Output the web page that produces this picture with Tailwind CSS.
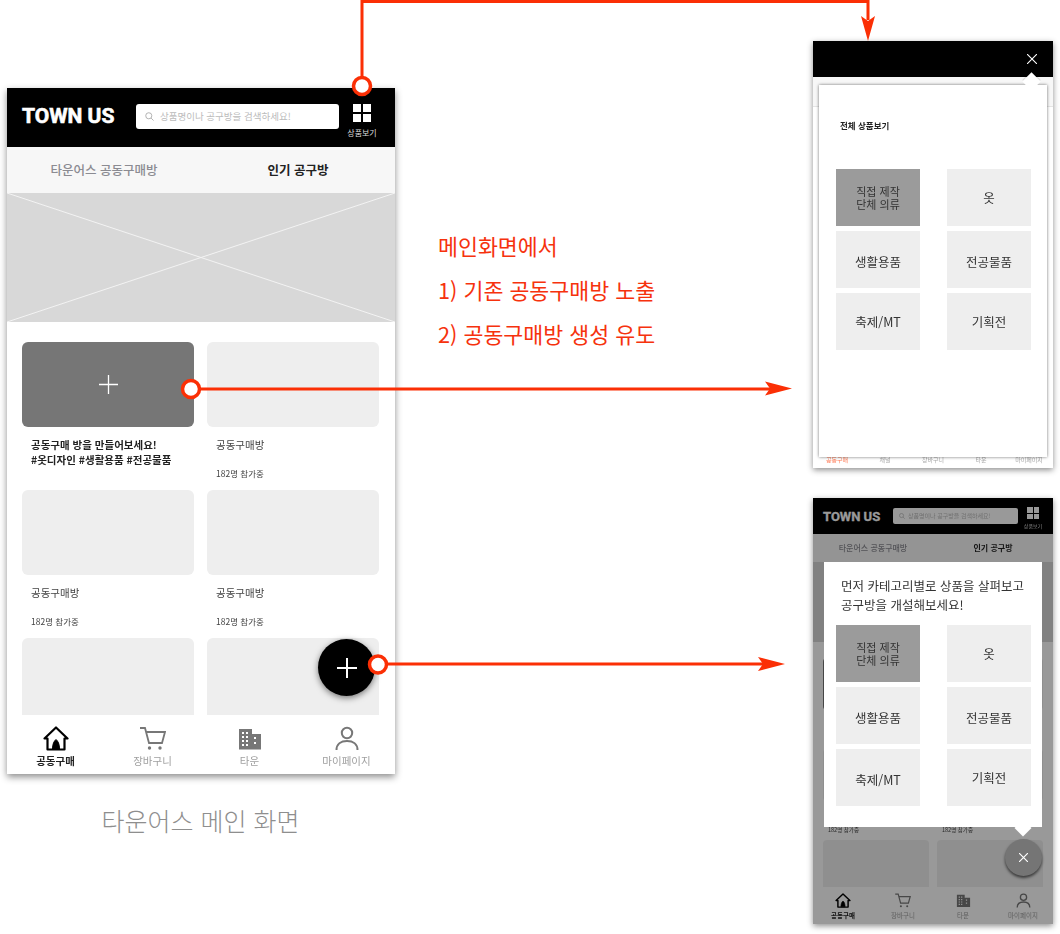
<!DOCTYPE html>
<html lang="ko">
<head>
<meta charset="utf-8">
<title>타운어스 메인 화면</title>
<script src="https://cdn.jsdelivr.net/npm/@tailwindcss/browser@4"></script>
</head>
<body class="bg-white">
<main class="relative w-[1060px] h-[934px] overflow-hidden bg-white font-['Noto_Sans_CJK_KR','Noto_Sans',sans-serif] text-[#222]">

  <!-- Main phone -->
  <section class="absolute left-[7px] top-[88px] w-[388px] h-[686px] flex flex-col overflow-hidden bg-white shadow-[0_3px_7px_rgba(0,0,0,0.45)] blur-[0.3px]">
    <header class="h-[59px] shrink-0 bg-black flex items-center pl-[15px] pr-[18px]">
      <div class="w-[114px] mb-[2px] font-['Roboto',sans-serif] font-bold text-[21px] leading-none text-white whitespace-nowrap [-webkit-text-stroke:0.6px_white]">TOWN US</div>
      <div class="mb-[2px] w-[203px] h-[25px] rounded-[3px] bg-white flex items-center pl-[9px] gap-[6px]">
        <svg class="w-[9px] h-[9px]" viewBox="0 0 10 10" fill="none" stroke="#aaa" stroke-width="1"><circle cx="4.2" cy="4.2" r="3.4"/><path d="M6.8 6.8 9.500 9.500"/></svg>
        <span class="text-[9.500px] leading-none text-[#bbb] whitespace-nowrap">상품명이나 공구방을 검색하세요!</span>
      </div>
      <div class="ml-auto w-[30px] self-start mt-[16px] flex flex-col items-center">
        <div class="grid grid-cols-2 gap-[2px] w-[18px]">
          <span class="h-[8px] bg-white"></span><span class="h-[8px] bg-white"></span><span class="h-[8px] bg-white"></span><span class="h-[8px] bg-white"></span>
        </div>
        <span class="mt-[5px] text-[8px] leading-[12px] text-[#ddd] whitespace-nowrap">상품보기</span>
      </div>
    </header>
    <nav class="h-[46px] shrink-0 bg-[#f7f7f7] grid grid-cols-2 items-center text-center text-[12.5px] font-medium">
      <span class="text-[#8b8b92]">타운어스 공동구매방</span>
      <span class="font-bold text-[#222]">인기 공구방</span>
    </nav>
    <div class="h-[129px] shrink-0 bg-[#d8d8d8]">
      <svg class="w-full h-full block" viewBox="0 0 388 129" preserveAspectRatio="none" fill="none" stroke="#f3f3f3" stroke-width="1"><path d="M0 0 388 129M388 0 0 129"/></svg>
    </div>
    <div class="flex-1 min-h-0 overflow-hidden pt-[20px] px-[15px] grid grid-cols-[172px_172px] gap-x-[13px] auto-rows-[148px]">
      <article>
        <div class="h-[85px] rounded-[6px] bg-[#767676] flex items-center justify-center">
          <svg class="w-[19px] h-[19px]" viewBox="0 0 19 19" stroke="#fff" stroke-width="1.3"><path d="M9.500 0v19M0 9.500h19"/></svg>
        </div>
        <p class="pt-[10px] pl-[9px] text-[10.5px] leading-[15px] font-bold whitespace-nowrap text-[#222]">공동구매 방을 만들어보세요!<br>#옷디자인 #생활용품 #전공물품</p>
      </article>
      <article>
        <div class="h-[85px] rounded-[6px] bg-[#eeeeee]"></div>
        <p class="pt-[11px] pl-[9px] text-[10.5px] leading-[14px] text-[#444]">공동구매방</p>
        <p class="mt-[14px] pl-[9px] text-[8.5px] leading-[14px] text-[#444]">182명 참가중</p>
      </article>
      <article>
        <div class="h-[85px] rounded-[6px] bg-[#eeeeee]"></div>
        <p class="pt-[11px] pl-[9px] text-[10.5px] leading-[14px] text-[#444]">공동구매방</p>
        <p class="mt-[14px] pl-[9px] text-[8.5px] leading-[14px] text-[#444]">182명 참가중</p>
      </article>
      <article>
        <div class="h-[85px] rounded-[6px] bg-[#eeeeee]"></div>
        <p class="pt-[11px] pl-[9px] text-[10.5px] leading-[14px] text-[#444]">공동구매방</p>
        <p class="mt-[14px] pl-[9px] text-[8.5px] leading-[14px] text-[#444]">182명 참가중</p>
      </article>
      <article><div class="h-[85px] rounded-[6px] bg-[#eeeeee]"></div></article>
      <article><div class="h-[85px] rounded-[6px] bg-[#eeeeee]"></div></article>
    </div>
    <footer class="h-[59px] shrink-0 bg-white grid grid-cols-4 text-center text-[10.500px] leading-[14px] text-[#a0a0a0] pt-[11px]">
      <div class="flex flex-col items-center gap-[3px]">
        <svg class="w-[26px] h-[25px]" viewBox="0 0 26 25" fill="none" stroke="#000" stroke-width="2.200" stroke-linejoin="round"><path d="M1.500 12.500 13 1.500l11.500 11h-3V23.500h-17V12.500z"/><path d="M9.500 23c0-5 1.500-8 3.500-9.500 2 1.500 3.500 4.500 3.500 9.500z" fill="#000" stroke-width="1"/></svg>
        <span class="font-bold text-[#222]">공동구매</span>
      </div>
      <div class="flex flex-col items-center gap-[3px]">
        <svg class="w-[26px] h-[25px]" viewBox="0 0 26 25" fill="none" stroke="#777" stroke-width="1.800"><path d="M0 2h5l4 15h13l3-11H6.500"/><circle cx="9.500" cy="22" r="1.700" fill="#777" stroke="none"/><circle cx="20" cy="22" r="1.700" fill="#777" stroke="none"/></svg>
        <span>장바구니</span>
      </div>
      <div class="flex flex-col items-center gap-[3px]">
        <svg class="w-[24px] h-[25px]" viewBox="0 0 24 25"><path fill="#777" fill-rule="evenodd" d="M1 3h13v5h9v15.500H1zM4 6v2h2V6zm4 0v2h2V6zM4 10v2h2v-2zm4 0v2h2v-2zM4 14v2h2v-2zm4 0v2h2v-2zM4 18v2h2v-2zm4 0v2h2v-2zm8-7v2h2v-2zm0 5v2h2v-2z"/></svg>
        <span>타운</span>
      </div>
      <div class="flex flex-col items-center gap-[3px]">
        <svg class="w-[24px] h-[25px]" viewBox="0 0 24 25" fill="none" stroke="#777" stroke-width="2"><circle cx="12" cy="7" r="5.200"/><path d="M1.500 24c0-6 4.500-9 10.500-9s10.500 3 10.500 9"/></svg>
        <span>마이페이지</span>
      </div>
    </footer>
    <div class="absolute left-[311px] top-[551px] w-[57px] h-[57px] rounded-full bg-black shadow-[0_2px_6px_rgba(0,0,0,0.5)] flex items-center justify-center">
      <svg class="w-[20px] h-[20px]" viewBox="0 0 20 20" stroke="#fff" stroke-width="2"><path d="M10 0v20M0 10h20"/></svg>
    </div>
  </section>

  <p class="absolute left-[0px] top-[800px] w-[401px] text-center text-[25px] leading-[40px] font-light text-[#8e8e8e]">타운어스 메인 화면</p>

  <!-- Annotation -->
  <div class="absolute left-[438px] top-[224px] text-[21.700px] leading-[44px] text-[#f6320d] whitespace-nowrap">
    <p>메인화면에서</p>
    <p>1) 기존 공동구매방 노출</p>
    <p>2) 공동구매방 생성 유도</p>
  </div>

  <!-- Category phone -->
  <section class="absolute left-[813px] top-[41px] w-[240px] h-[427px] flex flex-col overflow-hidden bg-white shadow-[0_2px_6px_rgba(0,0,0,0.45)] blur-[0.3px]">
    <header class="h-[36px] shrink-0 bg-black flex items-center justify-end pr-[16px]">
      <svg class="w-[10px] h-[10px]" viewBox="0 0 10 10" stroke="#fff" stroke-width="1.100"><path d="M0 0l10 10M10 0 0 10"/></svg>
    </header>
    <div class="h-[30px] shrink-0 bg-[#f7f7f7] border-b border-[#e4e4e4]"></div>
    <div class="flex-1"></div>
    <footer class="h-[11px] shrink-0 flex text-[6px] leading-[5px] text-[#aaa] text-center">
      <span class="w-[48px] text-[#ff7a55]">공동구매</span><span class="w-[48px]">채널</span><span class="w-[48px]">장바구니</span><span class="w-[48px]">타운</span><span class="w-[48px]">마이페이지</span>
    </footer>
    <div class="absolute left-[6px] top-[44px] w-[228px] h-[372px] bg-white shadow-[0_0_3px_rgba(0,0,0,0.55)] pl-[17px] pr-[16px]">
      <p class="pt-[31px] pl-[4px] text-[8.500px] leading-[18px] font-bold text-[#222]">전체 상품보기</p>
      <div class="mt-[35px] grid grid-cols-[84px_84px] justify-between gap-y-[5px] auto-rows-[57px] text-center text-[12.500px] leading-[13px] text-[#333]">
        <div class="bg-[#9b9b9b] flex items-center justify-center text-[11px]">직접 제작<br>단체 의류</div>
        <div class="bg-[#eeeeee] flex items-center justify-center">옷</div>
        <div class="bg-[#eeeeee] flex items-center justify-center pt-[3px]">생활용품</div>
        <div class="bg-[#eeeeee] flex items-center justify-center pt-[3px]">전공물품</div>
        <div class="bg-[#eeeeee] flex items-center justify-center">축제/MT</div>
        <div class="bg-[#eeeeee] flex items-center justify-center">기획전</div>
      </div>
    </div>
    <div class="absolute left-[212px] top-[34px] w-[13px] h-[13px] rotate-45 bg-white shadow-[-1px_-1px_1px_rgba(0,0,0,0.12)]"></div>
  </section>

  <!-- Guide phone -->
  <section class="absolute left-[813px] top-[498px] w-[240px] h-[426px] flex flex-col overflow-hidden bg-white shadow-[0_2px_6px_rgba(0,0,0,0.45)] blur-[0.3px]">
    <header class="h-[36px] shrink-0 bg-black flex items-center pl-[10px] pr-[10px]">
      <div class="w-[70px] font-['Roboto',sans-serif] font-bold text-[13px] leading-none text-white whitespace-nowrap [-webkit-text-stroke:0.3px_white]">TOWN US</div>
      <div class="w-[125px] h-[16px] rounded-[2px] bg-white flex items-center pl-[6px] gap-[3px]">
        <svg class="w-[6px] h-[6px]" viewBox="0 0 10 10" fill="none" stroke="#aaa" stroke-width="1"><circle cx="4.200" cy="4.200" r="3.400"/><path d="M6.800 6.800 9.500 9.500"/></svg>
        <span class="text-[6px] leading-none text-[#bbb] whitespace-nowrap">상품명이나 공구방을 검색하세요!</span>
      </div>
      <div class="ml-auto w-[20px] self-start mt-[9px] flex flex-col items-center">
        <div class="grid grid-cols-2 gap-[1px] w-[12px]">
          <span class="h-[5.500px] bg-white"></span><span class="h-[5.500px] bg-white"></span><span class="h-[5.500px] bg-white"></span><span class="h-[5.500px] bg-white"></span>
        </div>
        <span class="mt-[3px] text-[5px] leading-[8px] text-[#ddd] whitespace-nowrap">상품보기</span>
      </div>
    </header>
    <nav class="h-[28px] shrink-0 bg-[#f7f7f7] grid grid-cols-2 items-center text-center text-[8px] font-medium">
      <span class="text-[#8b8b92]">타운어스 공동구매방</span>
      <span class="font-bold text-[#222]">인기 공구방</span>
    </nav>
    <div class="h-[80px] shrink-0 bg-[#d8d8d8]"></div>
    <div class="flex-1 min-h-0 overflow-hidden pt-[16px] px-[10px] grid grid-cols-2 gap-x-[8px] auto-rows-[91px]">
      <article><div class="h-[52px] rounded-[4px] bg-[#767676]"></div></article>
      <article><div class="h-[52px] rounded-[4px] bg-[#eeeeee]"></div></article>
      <article><div class="h-[52px] rounded-[4px] bg-[#eeeeee]"></div><p class="pt-[25px] pl-[5px] text-[5.500px] leading-[8px] text-[#444]">182명 참가중</p></article>
      <article><div class="h-[52px] rounded-[4px] bg-[#eeeeee]"></div><p class="pt-[25px] pl-[5px] text-[5.500px] leading-[8px] text-[#444]">182명 참가중</p></article>
      <article><div class="h-[52px] rounded-[4px] bg-[#eeeeee]"></div></article>
      <article><div class="h-[52px] rounded-[4px] bg-[#eeeeee]"></div></article>
    </div>
    <footer class="h-[37px] shrink-0 bg-white grid grid-cols-4 text-center text-[6.500px] leading-[9px] text-[#a0a0a0] pt-[6px]">
      <div class="flex flex-col items-center gap-[3px]">
        <svg class="w-[16px] h-[15px]" viewBox="0 0 26 25" fill="none" stroke="#000" stroke-width="2.400" stroke-linejoin="round"><path d="M1.500 12.500 13 1.500l11.500 11h-3V23.500h-17V12.500z"/><path d="M9.500 23c0-5 1.500-8 3.500-9.500 2 1.500 3.500 4.500 3.500 9.500z" fill="#000" stroke-width="1"/></svg>
        <span class="font-bold text-[#222]">공동구매</span>
      </div>
      <div class="flex flex-col items-center gap-[3px]">
        <svg class="w-[16px] h-[15px]" viewBox="0 0 26 25" fill="none" stroke="#777" stroke-width="2"><path d="M0 2h5l4 15h13l3-11H6.500"/><circle cx="9.500" cy="22" r="1.700" fill="#777" stroke="none"/><circle cx="20" cy="22" r="1.700" fill="#777" stroke="none"/></svg>
        <span>장바구니</span>
      </div>
      <div class="flex flex-col items-center gap-[3px]">
        <svg class="w-[15px] h-[15px]" viewBox="0 0 24 25"><path fill="#777" fill-rule="evenodd" d="M1 3h13v5h9v15.500H1zM4 6v2h2V6zm4 0v2h2V6zM4 10v2h2v-2zm4 0v2h2v-2zM4 14v2h2v-2zm4 0v2h2v-2zM4 18v2h2v-2zm4 0v2h2v-2zm8-7v2h2v-2zm0 5v2h2v-2z"/></svg>
        <span>타운</span>
      </div>
      <div class="flex flex-col items-center gap-[3px]">
        <svg class="w-[15px] h-[15px]" viewBox="0 0 24 25" fill="none" stroke="#777" stroke-width="2.200"><circle cx="12" cy="7" r="5.200"/><path d="M1.500 24c0-6 4.500-9 10.500-9s10.500 3 10.500 9"/></svg>
        <span>마이페이지</span>
      </div>
    </footer>
    <div class="absolute inset-0 bg-black/40"></div>
    <div class="absolute left-[11px] top-[64px] w-[218px] h-[265px] bg-white pl-[12px] pr-[11px]">
      <p class="pt-[14px] pl-[5px] text-[12.500px] leading-[19px] text-[#333] whitespace-nowrap">먼저 카테고리별로 상품을 살펴보고<br>공구방을 개설해보세요!</p>
      <div class="mt-[11px] grid grid-cols-[84px_84px] justify-between gap-y-[5px] auto-rows-[57px] text-center text-[12.500px] leading-[13px] text-[#333]">
        <div class="bg-[#9b9b9b] flex items-center justify-center text-[11px]">직접 제작<br>단체 의류</div>
        <div class="bg-[#eeeeee] flex items-center justify-center">옷</div>
        <div class="bg-[#eeeeee] flex items-center justify-center pt-[4px]">생활용품</div>
        <div class="bg-[#eeeeee] flex items-center justify-center pt-[4px]">전공물품</div>
        <div class="bg-[#eeeeee] flex items-center justify-center pt-[4px]">축제/MT</div>
        <div class="bg-[#eeeeee] flex items-center justify-center">기획전</div>
      </div>
    </div>
    <div class="absolute left-[204px] top-[324px] w-[12px] h-[12px] rotate-45 bg-white"></div>
    <div class="absolute left-[192px] top-[341px] w-[37px] h-[37px] rounded-full bg-[#757575] shadow-[0_2px_3px_rgba(0,0,0,0.6)] flex items-center justify-center">
      <svg class="w-[9px] h-[9px]" viewBox="0 0 10 10" stroke="#fff" stroke-width="1.300"><path d="M0 0l10 10M10 0 0 10"/></svg>
    </div>
  </section>

  <!-- Connectors -->
  <svg class="absolute inset-0 w-[1060px] h-[934px] pointer-events-none" viewBox="0 0 1060 934" fill="none">
    <g stroke="#fb2f05" stroke-width="3">
      <path d="M362 78V1.500H868V20"/>
      <path d="M198 389H770"/>
      <path d="M385 664H765"/>
    </g>
    <g fill="#fb2f05">
      <path d="M868 41 861 16 868 21 875 16z"/>
      <path d="M792 388.500 765 381.500 770 388.500 765 395.500z"/>
      <path d="M785 664 758 657 763 664 758 671z"/>
    </g>
    <g fill="#fff" stroke="#fb2f05" stroke-width="3.500">
      <circle cx="362" cy="86" r="8.500"/>
      <circle cx="191" cy="389" r="8.500"/>
      <circle cx="378" cy="664.500" r="8.500"/>
    </g>
  </svg>
</main>
</body>
</html>
